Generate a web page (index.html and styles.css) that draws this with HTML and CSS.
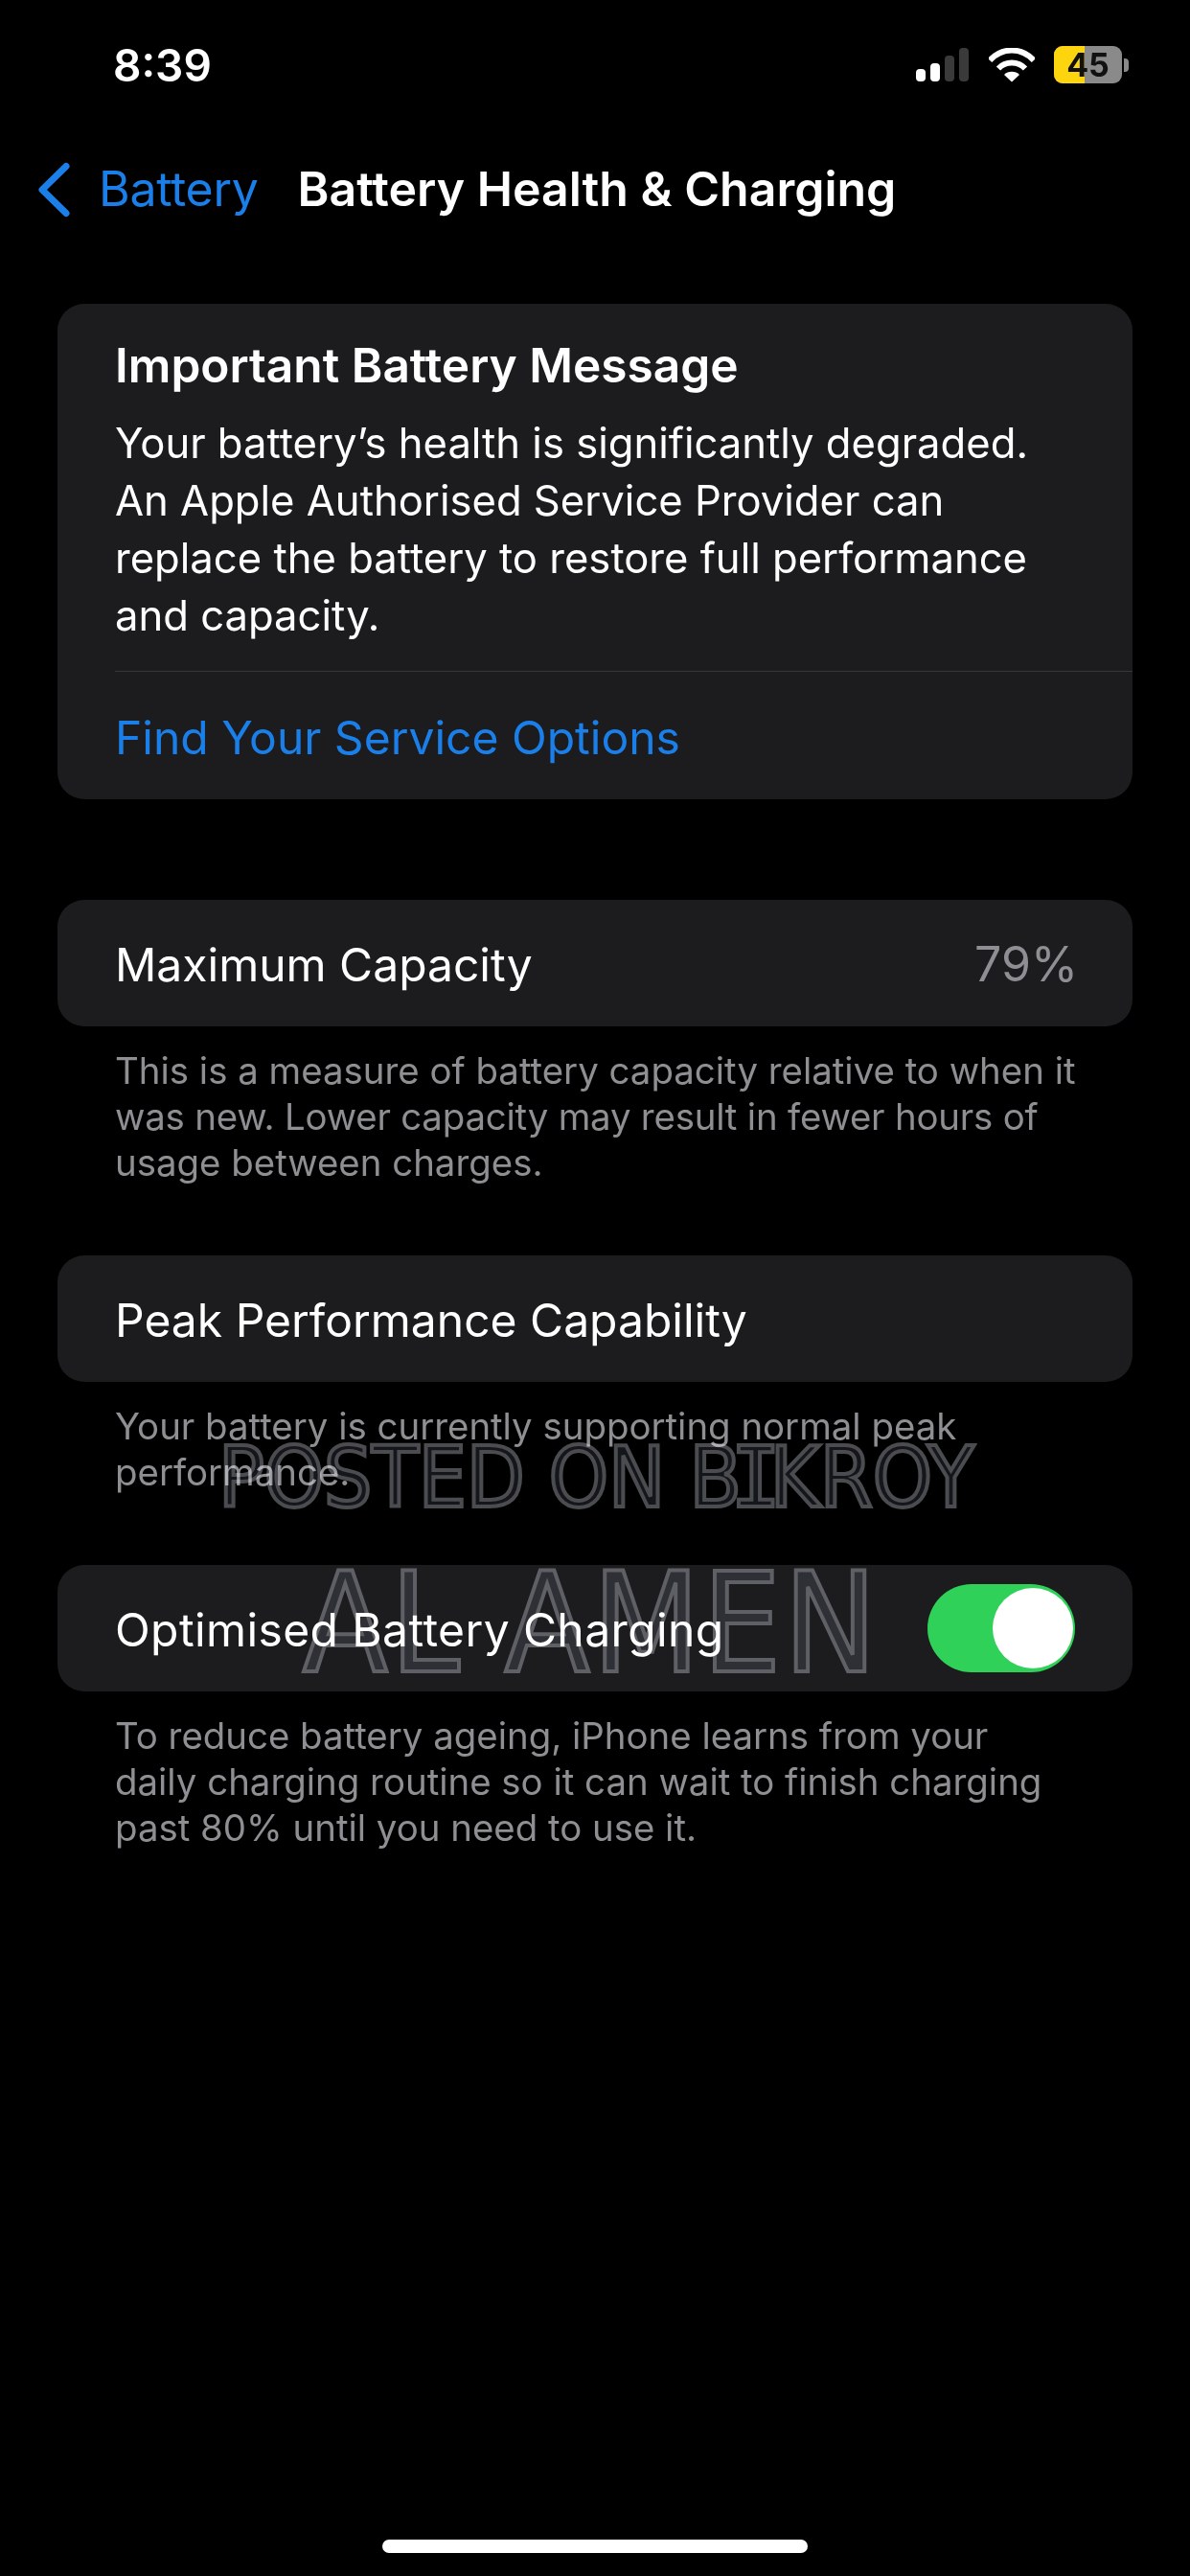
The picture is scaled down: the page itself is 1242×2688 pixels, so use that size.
FILE: index.html
```html
<!DOCTYPE html>
<html lang="en">
<head>
    <meta charset="UTF-8">
    <meta name="viewport" content="width=device-width, initial-scale=1.0">
    <title>Battery Health &amp; Charging</title>
    <link rel="stylesheet" href="styles.css">
</head>
<body>
    <div class="screen">
        <div class="status-bar">
            <div class="time">8:39</div>
            <div class="status-icons">
                <svg class="signal" width="56" height="36" viewBox="0 0 56 36">
                    <rect x="0" y="22" width="10" height="13" rx="4" fill="#fff"/>
                    <rect x="15" y="16" width="10" height="19" rx="4" fill="#fff"/>
                    <rect x="30" y="8" width="10" height="27" rx="4" fill="#3a3a3a"/>
                    <rect x="45" y="0" width="10" height="35" rx="4" fill="#3a3a3a"/>
                </svg>
                <svg class="wifi" width="48" height="36" viewBox="0 0 48 36">
                    <path d="M1 13C7 6.500 15 2.500 24 2.500S41 6.500 47 13" fill="none" stroke="#fff" stroke-width="6"/>
                    <path d="M10 21.500C13.500 17.800 18.500 15.500 24 15.500s10.500 2.300 14 6" fill="none" stroke="#fff" stroke-width="6"/>
                    <path d="M16 28c2-2 5-3.200 8-3.200s6 1.200 8 3.200l-8 7.500z" fill="#fff"/>
                </svg>
                <div class="battery">
                    <div class="battery-body">
                        <div class="battery-fill"></div>
                        <div class="battery-level">45</div>
                    </div>
                    <div class="battery-nub"></div>
                </div>
            </div>
        </div>

        <div class="nav-bar">
            <svg class="back-icon" width="38" height="64" viewBox="0 0 38 64">
                <path d="M31 7.500L6 32l25 24.500" fill="none" stroke="#1a7fe8" stroke-width="7" stroke-linecap="round" stroke-linejoin="round"/>
            </svg>
            <div class="back-label">Battery</div>
            <div class="nav-title">Battery Health &amp; Charging</div>
        </div>

        <div class="card message-card">
            <div class="message-body">
                <div class="message-title">Important Battery Message</div>
                <div class="message-text">Your battery’s health is significantly degraded.<br>An Apple Authorised Service Provider can<br>replace the battery to restore full performance<br>and capacity.</div>
            </div>
            <div class="message-link">Find Your Service Options</div>
        </div>

        <div class="card row capacity-row">
            <div class="row-label">Maximum Capacity</div>
            <div class="row-value">79%</div>
        </div>
        <div class="footnote">This is a measure of battery capacity relative to when it<br><span class="tight">was new. Lower capacity may result in fewer hours of</span><br>usage between charges.</div>

        <div class="card row peak-row">
            <div class="row-label">Peak Performance Capability</div>
        </div>
        <div class="footnote">Your battery is currently supporting normal peak<br>performance.</div>

        <div class="card row charging-row">
            <div class="row-label">Optimised Battery Charging</div>
            <div class="toggle"><div class="toggle-knob"></div></div>
        </div>
        <div class="footnote">To reduce battery ageing, iPhone learns from your<br>daily charging routine so it can wait to finish charging<br>past 80% until you need to use it.</div>

        <div class="watermark watermark-top">POSTED ON B<span class="watermark-i">I</span>KROY</div>
        <div class="watermark watermark-bottom">AL AMEN</div>

        <div class="home-indicator"></div>
    </div>
</body>
</html>
```

FILE: styles.css
```css
* {
    box-sizing: border-box;
}
html, body {
    margin: 0;
    padding: 0;
    background: #000;
}
body {
    font-family: Inter, "Liberation Sans", sans-serif;
    color: #fff;
}
.screen {
    position: relative;
    width: 1242px;
    height: 2688px;
    overflow: hidden;
    background: #000;
}
.status-bar {
    height: 130px;
    padding: 42px 64px 0 118px;
    display: flex;
    justify-content: space-between;
    align-items: flex-start;
}
.time {
    font-size: 46px;
    line-height: 52px;
    font-weight: 600;
}
.status-icons {
    display: flex;
    align-items: flex-start;
    padding-top: 6px;
}
.signal {
    margin-top: 2px;
    margin-right: 20px;
}
.wifi {
    margin-top: 2px;
    margin-right: 20px;
}
.battery {
    display: flex;
    align-items: center;
}
.battery-body {
    position: relative;
    width: 71px;
    height: 39px;
    border-radius: 9px;
    overflow: hidden;
    background: #8a8a8a;
}
.battery-fill {
    width: 32px;
    height: 100%;
    background: #fcd50f;
}
.battery-level {
    position: absolute;
    inset: 0;
    text-align: center;
    font-size: 34px;
    line-height: 39px;
    font-weight: 700;
    color: #111;
}
.battery-nub {
    width: 5px;
    height: 14px;
    margin-left: 2px;
    border-radius: 0 4px 4px 0;
    background: #8a8a8a;
}
.nav-bar {
    height: 187px;
    padding: 36px 0 0 38px;
    display: flex;
    align-items: flex-start;
}
.back-icon {
    margin-right: 27px;
}
.back-label {
    font-size: 50px;
    line-height: 62px;
    letter-spacing: -0.3px;
    color: #1a7fe8;
    margin-right: 41px;
}
.nav-title {
    font-size: 50px;
    line-height: 62px;
    font-weight: 600;
}
.card {
    margin: 0 60px;
    border-radius: 28px;
    background: #1c1c1e;
}
.message-card {
    height: 517px;
    padding-left: 60px;
    margin-bottom: 105px;
}
.message-body {
    height: 384px;
    padding-top: 34px;
    border-bottom: 1px solid #38383a;
}
.message-title {
    font-size: 49.6px;
    line-height: 60px;
    font-weight: 600;
    margin-bottom: 22px;
}
.message-text {
    font-size: 43.6px;
    line-height: 60px;
}
.message-link {
    font-size: 48px;
    line-height: 60px;
    color: #1a7fe8;
    padding-top: 39px;
}
.row {
    height: 132px;
    padding: 0 60px;
    display: flex;
    align-items: center;
    justify-content: space-between;
}
.row-label {
    font-size: 48px;
    padding-top: 2px;
}
.charging-row .row-label {
    letter-spacing: 0.4px;
}
.row-value {
    font-size: 50px;
    padding-top: 2px;
    color: #8e8e93;
    margin-right: -3px;
}
.footnote {
    margin: 0 60px 0;
    padding: 22px 60px 0;
    height: 239px;
    font-size: 38.4px;
    line-height: 48px;
    color: #8e8e93;
    white-space: nowrap;
}
.tight {
    letter-spacing: -0.2px;
}
.capacity-row + .footnote {
    height: 239px;
}
.peak-row + .footnote {
    height: 191px;
}
.toggle {
    width: 154px;
    height: 92px;
    border-radius: 46px;
    background: #30d158;
    display: flex;
    align-items: center;
    justify-content: flex-end;
    padding-right: 2px;
}
.toggle-knob {
    width: 84px;
    height: 84px;
    border-radius: 50%;
    background: #fff;
}
.watermark {
    position: absolute;
    font-family: "DejaVu Sans", sans-serif;
    font-stretch: condensed;
    color: #14161b;
    -webkit-text-stroke: 4px #4b4c50;
    mix-blend-mode: screen;
    white-space: nowrap;
}
.watermark-i {
    font-family: "DejaVu Sans Mono", monospace;
    font-stretch: normal;
    margin: 0 -0.13em;
}
.watermark-top {
    left: 228px;
    top: 1490px;
    font-size: 88px;
    line-height: 104px;
}
.watermark-bottom {
    left: 316px;
    top: 1622px;
    font-size: 144px;
    line-height: 144px;
    letter-spacing: 3px;
}
.home-indicator {
    position: absolute;
    left: 399px;
    bottom: 24px;
    width: 444px;
    height: 14px;
    border-radius: 7px;
    background: #fff;
}
```
